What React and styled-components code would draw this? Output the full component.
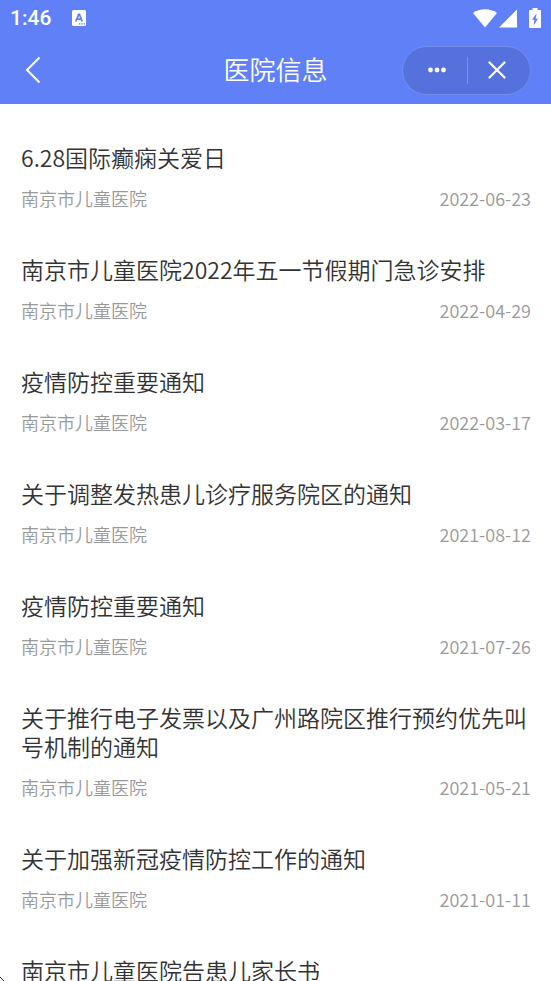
import React from 'react';
import styled, { createGlobalStyle } from 'styled-components';

const articles = [
  { title: '6.28国际癫痫关爱日', source: '南京市儿童医院', date: '2022-06-23' },
  { title: '南京市儿童医院2022年五一节假期门急诊安排', source: '南京市儿童医院', date: '2022-04-29' },
  { title: '疫情防控重要通知', source: '南京市儿童医院', date: '2022-03-17' },
  { title: '关于调整发热患儿诊疗服务院区的通知', source: '南京市儿童医院', date: '2021-08-12' },
  { title: '疫情防控重要通知', source: '南京市儿童医院', date: '2021-07-26' },
  { title: '关于推行电子发票以及广州路院区推行预约优先叫号机制的通知', source: '南京市儿童医院', date: '2021-05-21' },
  { title: '关于加强新冠疫情防控工作的通知', source: '南京市儿童医院', date: '2021-01-11' },
  { title: '南京市儿童医院告患儿家长书' },
];

function StatusBar() {
  return (
    <Status>
      <Clock>1:46</Clock>
      <svg width="14" height="16" viewBox="0 0 14 16" aria-hidden="true">
        <rect width="14" height="16" rx="1.5" fill="#fff" />
        <path d="M3.8 11.5 6.6 4.4h.8l2.8 7.1M4.9 9.2h4.2" fill="none" stroke="#5f80f6" strokeWidth="1.8" />
        <path d="M7 13.2h1.4v1.2H7zM9.3 13.2h1.4v1.2H9.3zM11.6 13.2H13v1.2h-1.4z" fill="#5f80f6" />
      </svg>
      <StatusIcons>
        <svg width="24" height="19" viewBox="0 0 24 19" aria-hidden="true">
          <path d="M0 4C6.8-1 17.2-1 24 4L12 18.5z" fill="#fff" />
        </svg>
        <svg width="18" height="19" viewBox="0 0 18 19" aria-hidden="true">
          <path d="M18 0.5v18H0z" fill="#fff" />
        </svg>
        <Battery width="12" height="20" viewBox="0 0 12 20" aria-hidden="true">
          <path
            fillRule="evenodd"
            fill="#fff"
            d="M3.5 0h5v2H11a1 1 0 0 1 1 1v16a1 1 0 0 1-1 1H1a1 1 0 0 1-1-1V3a1 1 0 0 1 1-1h2.5zM7.5 5.5 3 11.8h2.4L4.6 17.5 9 10.8H6.7z"
          />
        </Battery>
      </StatusIcons>
    </Status>
  );
}

function NavBar() {
  return (
    <Nav>
      <BackButton type="button" aria-label="返回">
        <svg width="16" height="28" viewBox="0 0 16 28" fill="none" stroke="#fff" strokeWidth="2">
          <path d="M14.5 1.5 2 14l12.5 12.5" />
        </svg>
      </BackButton>
      <PageTitle>医院信息</PageTitle>
      <Capsule>
        <CapsuleButton type="button" aria-label="更多">
          <svg width="20" height="6" viewBox="0 0 20 6" fill="#fff">
            <circle cx="3.5" cy="3" r="2.4" />
            <circle cx="10" cy="3" r="2.4" />
            <circle cx="16.5" cy="3" r="2.4" />
          </svg>
        </CapsuleButton>
        <Divider />
        <CapsuleButton type="button" aria-label="关闭">
          <svg width="18" height="18" viewBox="0 0 18 18" stroke="#fff" strokeWidth="2.2" strokeLinecap="round">
            <path d="M1.5 1.5l15 15M16.5 1.5l-15 15" />
          </svg>
        </CapsuleButton>
      </Capsule>
    </Nav>
  );
}

function Article({ title, source, date }) {
  return (
    <li>
      <ArticleLink href="#">
        <ArticleTitle>{title}</ArticleTitle>
        {date && (
          <Meta>
            <span>{source}</span>
            <time dateTime={date}>{date}</time>
          </Meta>
        )}
      </ArticleLink>
    </li>
  );
}

function App() {
  return (
    <Screen>
      <GlobalStyle />
      <Header>
        <StatusBar />
        <NavBar />
      </Header>
      <Content>
        <List>
          {articles.map((article, index) => (
            <Article key={index} {...article} />
          ))}
        </List>
      </Content>
      <CornerMark width="4" height="5" viewBox="0 0 4 5" aria-hidden="true">
        <path d="M0 1h1v1H0zM1 2h1v1H1zM2 3h1v1H2zM3 4h1v1H3z" fill="#222" />
      </CornerMark>
    </Screen>
  );
}

export default App

const GlobalStyle = createGlobalStyle`
    *, *::before, *::after {
        box-sizing: border-box;
    }
    body {
        margin: 0;
        background: #fff;
        font-family: 'Noto Sans CJK SC', 'Noto Sans', sans-serif;
        font-weight: 350;
    }
    button {
        display: flex;
        align-items: center;
        justify-content: center;
        padding: 0;
        border: 0;
        background: none;
        cursor: pointer;
    }
`

const Screen = styled.div`
    position: relative;
    display: flex;
    flex-direction: column;
    height: 100vh;
    overflow: hidden;
`

const Header = styled.header`
    flex: none;
    background: #5f80f6;
    color: #fff;
`

const Status = styled.div`
    display: flex;
    align-items: center;
    gap: 21px;
    height: 36px;
    padding: 0 10px;
`

const Clock = styled.span`
    font-family: Roboto, sans-serif;
    font-size: 21px;
    font-weight: 500;
    line-height: 38px;
`

const StatusIcons = styled.div`
    display: flex;
    align-items: center;
    gap: 2px;
    margin-left: auto;
`

const Battery = styled.svg`
    margin-left: 10px;
`

const Nav = styled.nav`
    display: grid;
    grid-template-columns: 1fr auto 1fr;
    align-items: center;
    height: 68px;
    padding: 0 20px;
`

const BackButton = styled.button`
    justify-self: start;
    width: 25px;
    height: 44px;
`

const PageTitle = styled.h1`
    margin: 0;
    padding-bottom: 2px;
    font-size: 26px;
    font-weight: 350;
    line-height: 38px;
`

const Capsule = styled.div`
    display: flex;
    align-items: center;
    justify-self: end;
    width: 129px;
    height: 49px;
    border: 1px solid #7590ec;
    border-radius: 25px;
    background: #5471dc;
`

const CapsuleButton = styled.button`
    flex: 1;
    height: 100%;
    &:first-child {
        padding-left: 4px;
    }
    &:last-child {
        padding-right: 3px;
    }
`

const Divider = styled.span`
    width: 1px;
    height: 27px;
    background: #7b92e5;
`

const Content = styled.main`
    flex: 1;
    min-height: 0;
    padding: 39px 20px 0 21px;
    overflow-y: auto;
    scrollbar-width: none;
`

const List = styled.ul`
    display: flex;
    flex-direction: column;
    gap: 44px;
    margin: 0;
    padding: 0;
    list-style: none;
`

const ArticleLink = styled.a`
    display: flex;
    flex-direction: column;
    gap: 13px;
    color: #333;
    text-decoration: none;
`

const ArticleTitle = styled.h2`
    margin: 0;
    font-size: 23px;
    font-weight: 350;
    line-height: 29px;
`

const Meta = styled.div`
    display: flex;
    justify-content: space-between;
    color: #999;
    font-size: 18px;
    line-height: 26px;
`

const CornerMark = styled.svg`
    position: absolute;
    bottom: 0;
    left: 0;
`
